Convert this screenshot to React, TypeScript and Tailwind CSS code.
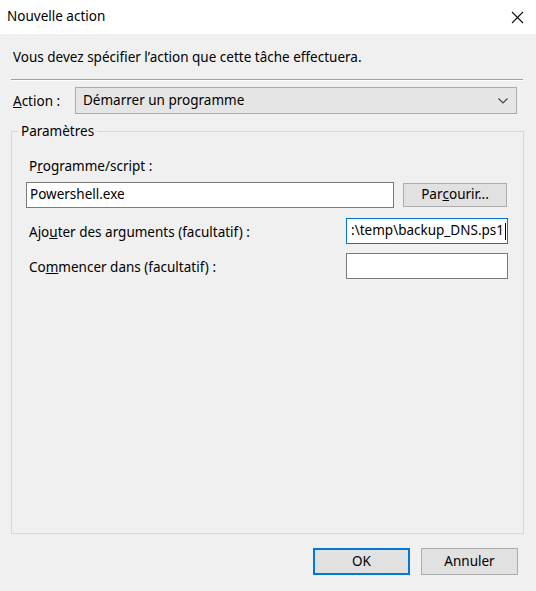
import * as React from "react";

const font = { fontFamily: '"Noto Sans", "Open Sans", sans-serif' };

function Field({ className, children }: { className: string; children?: React.ReactNode }) {
  return (
    <div className={`bg-white border border-[#7a7a7a] h-[26px] flex items-center px-[3px] overflow-hidden whitespace-nowrap ${className}`}>
      {children}
    </div>
  );
}

export default function App() {
  return (
    <div className="w-[536px] h-[591px] flex flex-col text-[13.5px] text-black leading-none" style={font}>
      <div className="h-[34px] bg-white flex items-center justify-between pl-[7px] pr-[12px] shrink-0">
        <span>Nouvelle action</span>
        <svg width="13" height="13" viewBox="0 0 13 13" className="text-[#111]">
          <path d="M1 1 L12 12 M12 1 L1 12" stroke="currentColor" strokeWidth="1.1" />
        </svg>
      </div>

      <div className="flex-1 bg-[#f0f0f0] flex flex-col pl-[11px] pr-[12px]">
        <div className="pl-[2px] mt-[15px] h-[18px] flex items-center">
          Vous devez spécifier l’action que cette tâche effectuera.
        </div>
        <div className="mt-[12px] mr-[1px] border-t border-[#a0a0a0] border-b border-b-white" />

        <div className="mt-[6px] flex items-center">
          <span className="pl-[2px] w-[64px] mt-[2px]">
            <u>A</u>ction :
          </span>
          <div className="w-[442px] h-[27px] bg-[#e5e5e5] border border-[#adadad] flex items-center justify-between pl-[7px] pr-[8px]">
            <span>Démarrer un programme</span>
            <svg width="10" height="6" viewBox="0 0 10 6">
              <path d="M0.5 0.5 L5 5 L9.5 0.5" fill="none" stroke="#444" strokeWidth="1.2" />
            </svg>
          </div>
        </div>

        <fieldset className="mt-[8px] w-[513px] h-[412px] border border-[#d8d8d8]">
          <legend className="ml-[6px] px-[3px] leading-[18px]">Paramètres</legend>
          <div className="pl-[14px] pr-[15px]">
            <div className="pt-[18px] pl-[3px] h-[36px] flex items-center">
              P<u>r</u>ogramme/script :
            </div>
            <div className="mt-[6px] flex items-center">
              <Field className="w-[368px]">Powershell.exe</Field>
              <button className="ml-[9px] w-[104px] h-[24px] bg-[#e1e1e1] border border-[#adadad] flex items-center justify-center">
                Par<u>c</u>ourir...
              </button>
            </div>
            <div className="mt-[10px] flex items-center justify-between">
              <span className="pl-[3px] pt-[4px]">
                Ajo<u>u</u>ter des arguments (facultatif) :
              </span>
              <Field className="w-[162px] border-[#0078d7] justify-end pr-[1px]">
                <span>:\temp\backup_DNS.ps1</span>
                <span className="w-px h-[17px] bg-black ml-[1px]" />
              </Field>
            </div>
            <div className="mt-[9px] flex items-center justify-between">
              <span className="pl-[3px] pt-[4px]">
                Co<u>m</u>mencer dans (facultatif) :
              </span>
              <Field className="w-[162px]" />
            </div>
          </div>
        </fieldset>

        <div className="mt-[14px] flex justify-end gap-[11px] pr-[6px]">
          <button className="w-[97px] h-[27px] bg-[#e1e1e1] border-2 border-[#0078d7] flex items-center justify-center">
            OK
          </button>
          <button className="w-[97px] h-[27px] bg-[#e1e1e1] border border-[#adadad] flex items-center justify-center">
            Annuler
          </button>
        </div>
      </div>
    </div>
  );
}
